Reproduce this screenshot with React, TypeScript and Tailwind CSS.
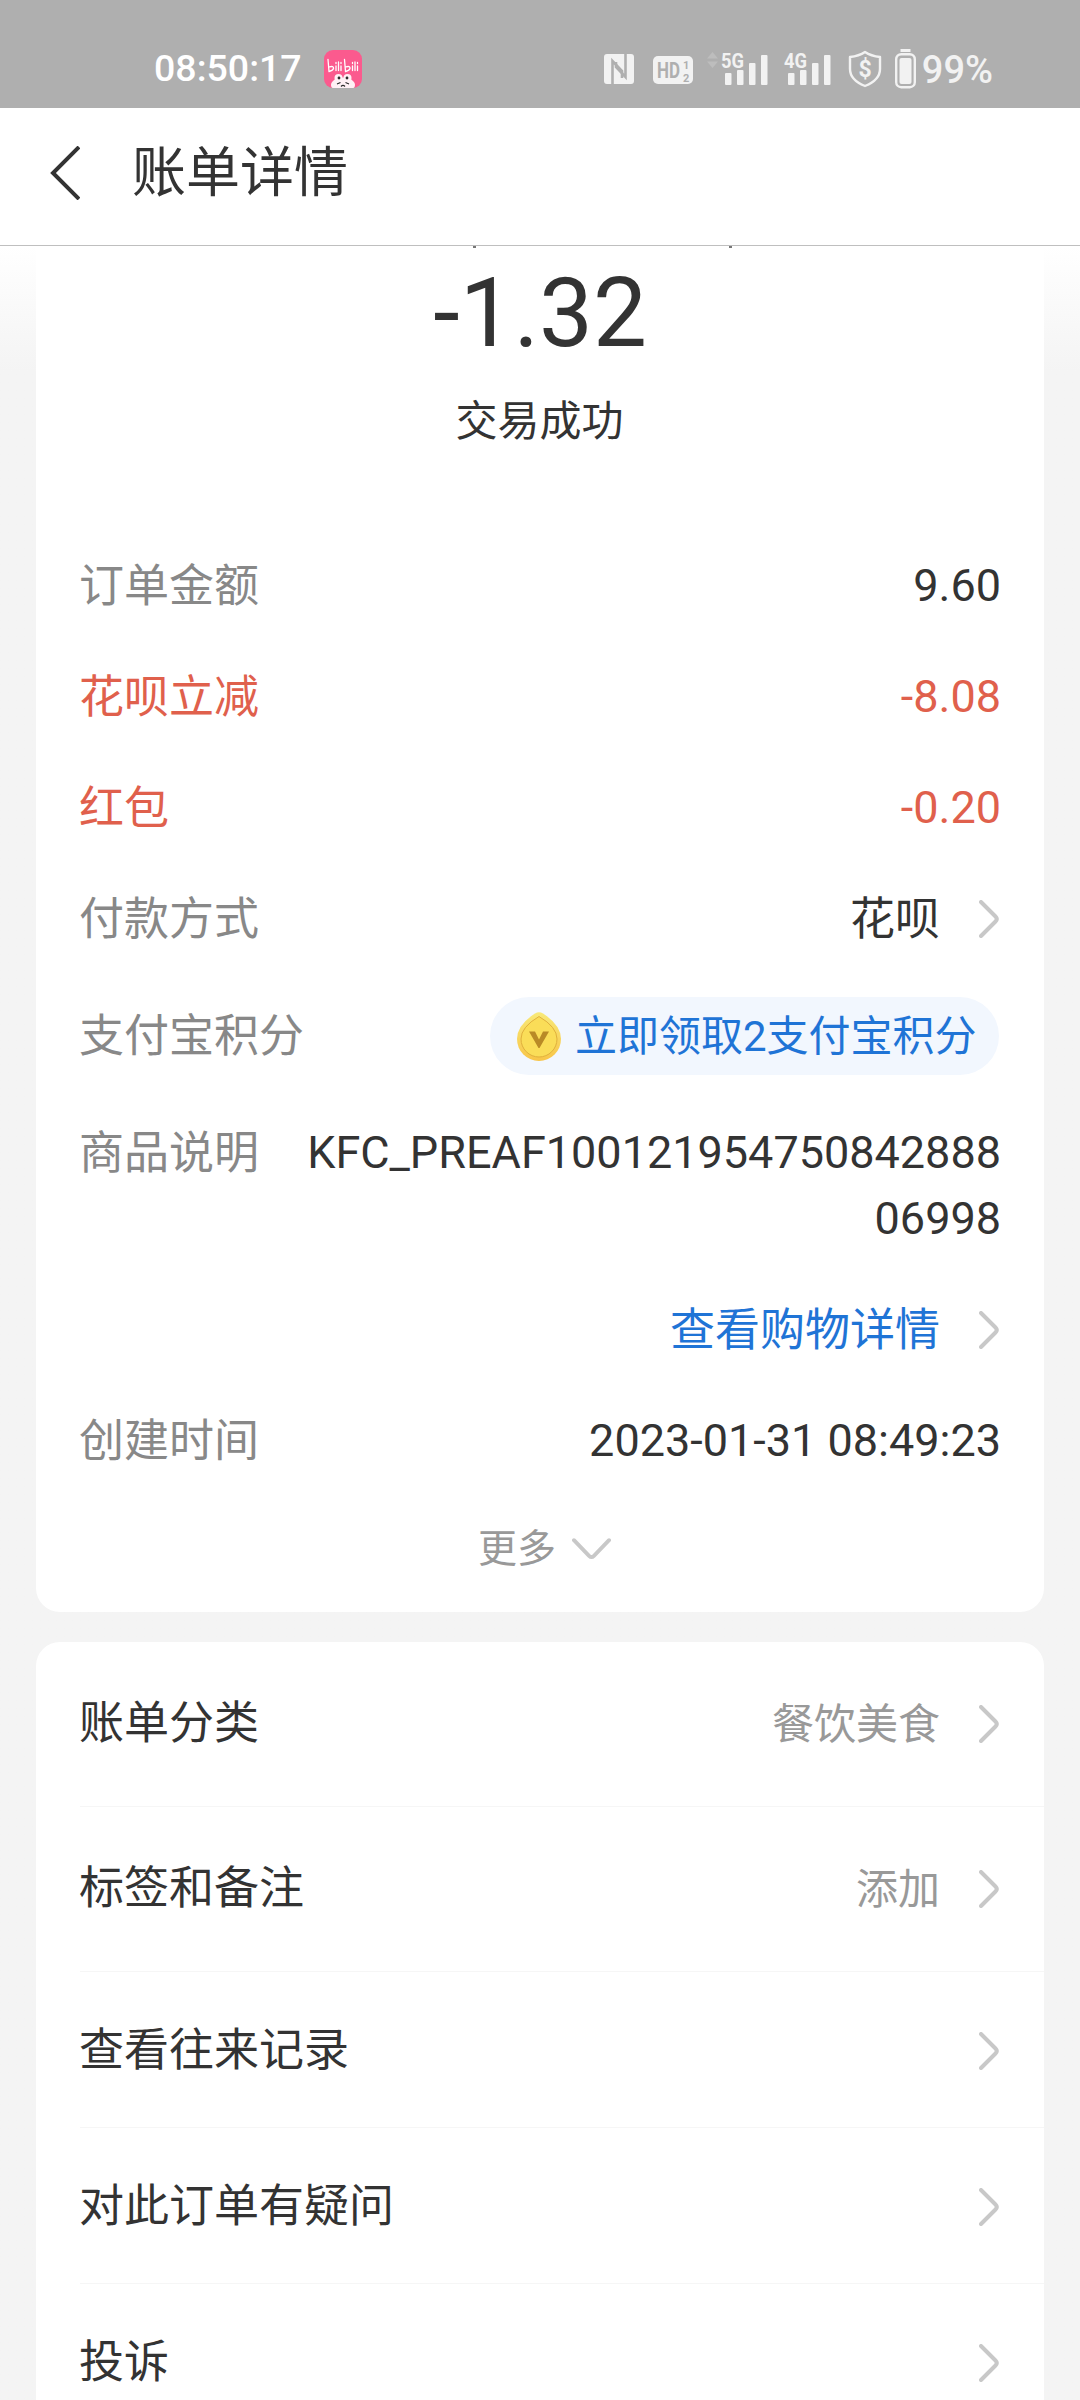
import type { ReactNode } from "react";

type DetailRow = { label: string; value: string; red?: boolean };
type LinkRow = { label: string; value?: string; height: string };

const amounts: DetailRow[] = [
  { label: "订单金额", value: "9.60" },
  { label: "花呗立减", value: "-8.08", red: true },
  { label: "红包", value: "-0.20", red: true },
];

const links: LinkRow[] = [
  { label: "账单分类", value: "餐饮美食", height: "h-[165px]" },
  { label: "标签和备注", value: "添加", height: "h-[165px]" },
  { label: "查看往来记录", height: "h-[156px] pt-[3px]" },
  { label: "对此订单有疑问", height: "h-[156px] pt-[3px]" },
  { label: "投诉", height: "h-[156px] pt-[3px]" },
];

function ChevronRight() {
  return (
    <svg className="mr-[2px] ml-[39px] shrink-0" width="20" height="38" viewBox="0 0 20 38" fill="none" stroke="#c8c8c8" strokeWidth="4" strokeLinecap="round" strokeLinejoin="round">
      <path d="M2 2 L16.500 16.500 Q19 19 16.500 21.500 L2 36" />
    </svg>
  );
}

function BiliIcon() {
  return (
    <svg className="ml-[22px]" width="38" height="38" viewBox="0 0 38 38">
      <defs>
        <clipPath id="bili"><rect width="38" height="38" rx="9" /></clipPath>
      </defs>
      <g clipPath="url(#bili)">
        <rect width="38" height="38" fill="#fb5a8e" />
        <g stroke="#fff" strokeWidth="1.3" fill="none" strokeLinecap="round">
          <path d="M4 9.500L5 21.500M5 17Q10 15.500 9.500 18.500Q9 20.500 5 21.500M12 16V20.500M12 12.500V13.500M14.500 12V20.500M17 16V20.500M17 12.500V13.500" />
          <path d="M20.500 9.500L21.500 21.500M21.500 17Q26.500 15.500 26 18.500Q25.500 20.500 21.500 21.500M28.500 16V20.500M28.500 12.500V13.500M31 12V20.500M33.500 16V20.500M33.500 12.500V13.500" />
        </g>
        <ellipse cx="19" cy="35" rx="12" ry="7.500" fill="#fff0f5" />
        <circle cx="14.500" cy="28" r="4" fill="#fff0f5" />
        <circle cx="23.500" cy="28" r="4" fill="#fff0f5" />
        <circle cx="15" cy="28" r="1.400" fill="#2b2b2b" />
        <circle cx="23" cy="28" r="1.400" fill="#2b2b2b" />
        <path d="M13 34L16.500 32.500M25 34L21.500 32.500M17 36.500Q19 34.500 21 36.500" stroke="#2b2b2b" strokeWidth="1.200" fill="none" />
      </g>
    </svg>
  );
}

function Signal({ label }: { label: string }) {
  return (
    <svg className="-mt-1" width="50" height="40" viewBox="0 -4 50 40" fill="#f2f2f2">
      <text x="0" y="17" fontSize="20.500" fontWeight="700" fontFamily="Roboto, sans-serif" textLength="23" lengthAdjust="spacingAndGlyphs">{label}</text>
      <rect x="4" y="22" width="6.500" height="12" rx="1" />
      <rect x="16" y="19" width="6.500" height="15" rx="1" />
      <rect x="28" y="12" width="6.500" height="22" rx="1" />
      <rect x="40" y="4" width="6.500" height="30" rx="1" />
    </svg>
  );
}

function StatusBar() {
  return (
    <div className="flex h-[108px] shrink-0 items-center bg-[#afafaf] pt-[30px] pl-[154px] text-[38px] leading-none text-white">
      <span className="w-[148px] text-[37.5px] font-medium whitespace-nowrap">08:50:17</span>
      <BiliIcon />
      <div className="ml-auto flex items-center pr-[87px] text-[#f2f2f2]">
        <svg width="30" height="30" viewBox="0 0 30 30">
          <rect width="30" height="30" rx="3" fill="#f2f2f2" />
          <g fill="none" stroke="#afafaf" strokeWidth="2.600">
            <path d="M8.500 30V7L18 17V24" />
            <path d="M21.500 0V23L12 13V8" />
          </g>
        </svg>
        <svg className="mt-[2px] ml-[19px]" width="40" height="28" viewBox="0 0 40 28">
          <rect width="40" height="28" rx="5" fill="#f2f2f2" />
          <g fill="#afafaf" fontFamily="Roboto, sans-serif" fontWeight="700">
            <text x="4" y="22" fontSize="22" textLength="23" lengthAdjust="spacingAndGlyphs">HD</text>
            <text x="30" y="12.500" fontSize="11">1</text>
            <text x="30" y="25.500" fontSize="11">2</text>
          </g>
        </svg>
        <svg className="mr-[3px] mb-[18px] ml-[14px]" width="11" height="16" viewBox="0 0 11 16" fill="#bdbdbd">
          <path d="M5.500 0L11 6.500H0ZM5.500 16L0 9.500H11Z" />
        </svg>
        <Signal label="5G" />
        <div className="w-[13px]" />
        <Signal label="4G" />
        <svg className="ml-[14px]" width="34" height="38" viewBox="0 0 34 38" fill="none">
          <path d="M17 2Q23 6 32 7V19Q32 30 17 36Q2 30 2 19V7Q11 6 17 2Z" stroke="#f2f2f2" strokeWidth="2.400" strokeLinejoin="round" />
          <text x="17" y="27" fontSize="23" fontWeight="700" fontFamily="Roboto, sans-serif" textAnchor="middle" fill="#f2f2f2">$</text>
        </svg>
        <svg className="ml-[13px]" width="21" height="40" viewBox="0 0 21 40">
          <rect x="5.500" y="0" width="10" height="3" fill="#f2f2f2" />
          <rect x="1.200" y="5.200" width="18.600" height="33" rx="5" fill="none" stroke="#f2f2f2" strokeWidth="2.400" />
          <rect x="4.500" y="9" width="12" height="26" rx="2" fill="#f2f2f2" />
        </svg>
        <span className="mt-[2px] ml-[6px] font-medium">99%</span>
      </div>
    </div>
  );
}

function Coin() {
  return (
    <svg width="44" height="49" viewBox="0 0 44 49">
      <defs>
        <linearGradient id="coin" x1="0" y1="0" x2="0" y2="1">
          <stop offset="0" stopColor="#f8e978" />
          <stop offset="1" stopColor="#f8c548" />
        </linearGradient>
      </defs>
      <path d="M18 1.500Q22 -1 26 1.500Q44 13 44 27A22 22 0 0 1 0 27Q0 13 18 1.500Z" fill="url(#coin)" />
      <path d="M22 4.500Q40 15 40 27A18 18 0 0 1 4 27Q4 15 22 4.500Z" fill="#fadd58" stroke="#e0b03c" strokeWidth="1" />
      <path d="M12 19.500H18L22 27.500L26 19.500H32L22.500 36H21.500Z" fill="#b98a26" />
    </svg>
  );
}

function Row({ label, height, className = "", children }: { label?: string; height: string; className?: string; children: ReactNode }) {
  return (
    <div className={`flex items-center justify-between ${height} ${className}`}>
      <span className={className ? "pt-[2px]" : "pt-[2px] text-[#888888]"}>{label}</span>
      <div className="flex items-center">{children}</div>
    </div>
  );
}

export default function App() {
  return (
    <div className="flex h-[2400px] w-[1080px] flex-col overflow-hidden bg-[#f4f4f4] font-[Roboto,'Noto_Sans_CJK_SC',sans-serif] text-[45px] leading-[66px] text-[#333333]">
      <StatusBar />
      <header className="flex h-[138px] shrink-0 items-center border-b border-[#bfbfbf] bg-white pb-[8px] pl-[50px]">
        <svg width="30" height="54" viewBox="0 0 30 54" fill="none" stroke="#333333" strokeWidth="4">
          <path d="M29 1L3 27L29 53" />
        </svg>
        <h1 className="mt-[2px] ml-[52px] text-[54px] leading-none">账单详情</h1>
      </header>

      <main className="flex flex-1 flex-col gap-[30px] bg-linear-to-b from-white to-[#f4f4f4] to-[125px] px-9">
        <section className="h-[1366px] shrink-0 rounded-b-3xl bg-white px-[43px]">
          {/* tips of the payee line that is scrolled under the header */}
          <div className="flex h-[2px] justify-center gap-[253px] pl-[124px]">
            <i className="w-[3px] bg-[#777777]" />
            <i className="w-[3px] bg-[#777777]" />
          </div>
          <p className="mt-[8px] text-center text-[96px] leading-[114px]">-1.32</p>
          <p className="mt-[21px] pr-px text-center text-[42px] leading-[62px]">交易成功</p>

          <div className="mt-[77px]">
            {amounts.map((row) => (
              <Row key={row.label} label={row.label} height="h-[111px]" className={row.red ? "text-[#e0604c]" : ""}>
                {row.value}
              </Row>
            ))}
            <Row label="付款方式" height="h-[111px]">
              <span className="pt-[2px]">花呗</span>
              <ChevronRight />
            </Row>
            <Row label="支付宝积分" height="h-[124px]">
              <div className="mr-[2px] flex h-[78px] w-[509px] items-center gap-[14px] rounded-full bg-[#f2f7fe] pl-[27px] text-[42px] whitespace-nowrap text-[#1f74d6]">
                <Coin />
                <span className="pt-[2px]">立即领取2支付宝积分</span>
              </div>
            </Row>
            <div className="mt-[22px] flex justify-between">
              <span className="pt-px text-[#888888]">商品说明</span>
              <span className="w-[696px] text-right break-all">KFC_PREAF10012195475084288806998</span>
            </div>
            <div className="mt-[22px]">
              <Row height="h-[111px]">
                <span className="pt-[2px] text-[#1f74d6]">查看购物详情</span>
                <ChevronRight />
              </Row>
            </div>
            <Row label="创建时间" height="h-[111px]">2023-01-31 08:49:23</Row>
          </div>

          <div className="mt-[20px] flex items-center justify-center pl-[9px] text-[39px] text-[#999999]">
            更多
            <svg className="ml-[16px]" width="39" height="22" viewBox="0 0 40 22" fill="none" stroke="#c8c8c8" strokeWidth="4" strokeLinecap="round" strokeLinejoin="round">
              <path d="M2 2L17.500 18Q20 20.500 22.500 18L38 2" />
            </svg>
          </div>
        </section>

        <section className="shrink-0 rounded-3xl bg-white pl-11">
          {links.map((link) => (
            <div key={link.label} className={`flex items-center border-b border-[#f6f6f6] pr-[43px] ${link.height}`}>
              <span className="-ml-px flex-1">{link.label}</span>
              {link.value && <span className="pt-px text-[42px] text-[#999999]">{link.value}</span>}
              <ChevronRight />
            </div>
          ))}
        </section>
      </main>
    </div>
  );
}
